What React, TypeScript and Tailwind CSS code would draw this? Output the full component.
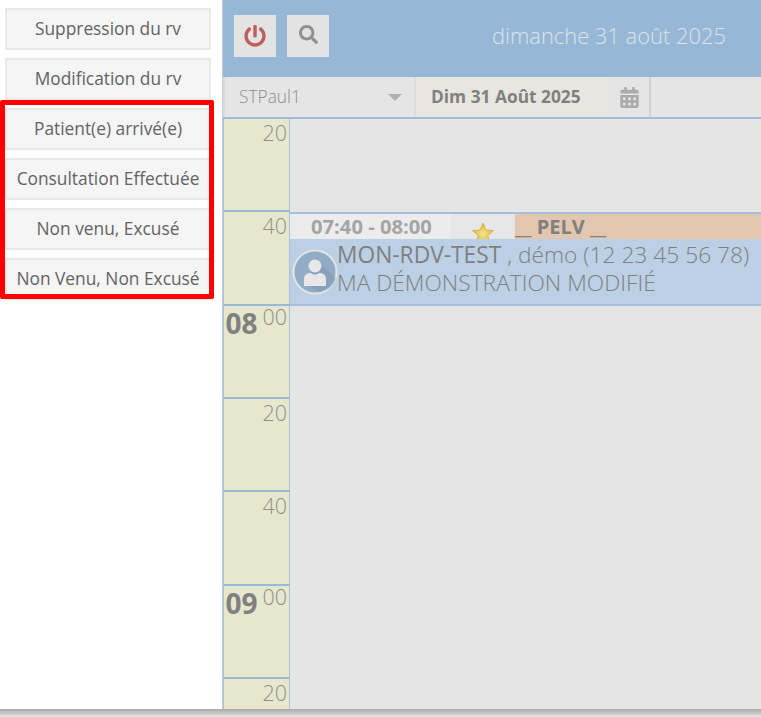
import React from "react";
import { FaPowerOff, FaSearch, FaCalendarAlt } from "react-icons/fa";

const actions = [
  "Suppression du rv",
  "Modification du rv",
  "Patient(e) arrivé(e)",
  "Consultation Effectuée",
  "Non venu, Excusé",
  "Non Venu, Non Excusé",
];

const TimeCell = ({ hour, min }: { hour?: string; min: string }) => (
  <div className="h-[93.33px] w-[67px] shrink-0 border-x border-b-2 border-[#98b7d5] border-x-[#a9c1d9] bg-[#e6e7cd] pr-[2px] text-right text-[#8f8f8f]">
    {hour && <span className="mr-[5px] text-[28px] leading-[34px] font-bold text-[#808080]">{hour}</span>}
    <span className={hour ? "relative top-[-9px] text-[21.5px] font-light" : "text-[21.5px] leading-[28px] font-light"}>{min}</span>
  </div>
);

const Avatar = () => (
  <svg viewBox="0 0 46 46" className="ml-[2px] mr-[-1px] h-[46px] w-[46px] shrink-0">
    <circle cx="23" cy="23" r="21.5" fill="#92abc6" stroke="#e3e3e3" strokeWidth="2" />
    <path d="M24 9 L44 30 A21 21 0 0 1 28 43 L14 36 Z" fill="#7f99b7" opacity="0.55" />
    <circle cx="23" cy="17" r="6.5" fill="#e8e8e8" />
    <path d="M12 37 V30 C12 25 16 24 19 24 C21 26 25 26 27 24 C30 24 34 25 34 30 V37 Z" fill="#e8e8e8" />
  </svg>
);

const GoldStar = () => (
  <svg viewBox="0 0 24 24" className="absolute left-[20px] top-[7px] h-[24px] w-[24px]">
    <defs>
      <radialGradient id="gold" cx="50%" cy="55%" r="50%">
        <stop offset="0%" stopColor="#f3e58a" />
        <stop offset="100%" stopColor="#dcb93f" />
      </radialGradient>
    </defs>
    <path d="M12 2 L15 9 L22.5 9.6 L16.8 14.5 L18.6 22 L12 18 L5.4 22 L7.2 14.5 L1.5 9.6 L9 9 Z" fill="url(#gold)" stroke="#cfae3f" strokeWidth="0.8" strokeLinejoin="round" />
  </svg>
);

export default function App() {
  return (
    <div className="relative flex h-[717px] w-[761px] overflow-hidden bg-white font-['Open_Sans',sans-serif]">
      {/* left action buttons */}
      <div className="flex w-[222px] shrink-0 flex-col gap-2 pl-[5px] pt-2">
        {actions.map((label) => (
          <div
            key={label}
            className="flex h-[42px] w-[206px] shrink-0 items-center justify-center whitespace-nowrap border-2 border-[#e8e8e8] bg-[#f5f5f5] text-[17.33px] text-[#636363]"
          >
            {label}
          </div>
        ))}
      </div>

      {/* agenda */}
      <div className="flex h-[709px] flex-1 flex-col overflow-hidden border-l border-[#c4cdd6] bg-[#e5e5e5]">
        <div className="flex h-[77px] shrink-0 items-start bg-[#97b7d6] pl-[11px] pt-[15px]">
          <div className="flex h-[42px] w-[42px] items-center justify-center bg-[#e3e3e3]">
            <FaPowerOff size={22} className="text-[#bd5f5f]" />
          </div>
          <div className="ml-[11px] flex h-[42px] w-[42px] items-center justify-center bg-[#e3e3e3]">
            <FaSearch size={19} className="mb-[4px] text-[#8f8f8f]" />
          </div>
          <span className="ml-[163px] mt-[5px] whitespace-nowrap text-[21.9px] font-light text-[#dce3ea]">dimanche 31 août 2025</span>
        </div>

        <div className="flex h-[42px] shrink-0 border-b-2 border-[#a3bbd4]">
          <div className="flex w-[193px] items-center justify-between border-x-2 border-[#dcdcdc] pl-[14px] pr-[12px]">
            <span className="text-[17.33px] font-light text-[#8c8c8c]">STPaul1</span>
            <span className="h-0 w-0 border-x-[7px] border-t-[7px] border-x-transparent border-t-[#b0b0b0]" />
          </div>
          <div className="flex w-[193px] items-center bg-[#e8e6e1] pl-[15px] text-[17.33px] font-bold text-[#808080]">
            Dim 31 Août 2025
          </div>
          <div className="flex w-[42px] items-center justify-center border-r-2 border-[#d2d2d2]">
            <FaCalendarAlt size={21} className="text-[#ababab]" />
          </div>
        </div>

        <div className="flex min-h-0 flex-1">
          <div className="flex w-[67px] shrink-0 flex-col">
            <TimeCell min="20" />
            <TimeCell min="40" />
            <TimeCell hour="08" min="00" />
            <TimeCell min="20" />
            <TimeCell min="40" />
            <TimeCell hour="09" min="00" />
            <TimeCell min="20" />
          </div>

          <div className="min-w-0 flex-1 pt-[93px]">
            <div className="flex h-[94px] flex-col border-y-2 border-[#a3bfdb]">
              <div className="flex h-[25px] shrink-0 bg-[#e7e7e7]">
                <div className="w-[161px] bg-[#ececec] pl-[21px] text-[20.2px] leading-[25px] font-bold text-[#a5a5a5]">07:40 - 08:00</div>
                <div className="relative w-[64px] overflow-hidden">
                  <GoldStar />
                </div>
                <div className="flex-1 bg-[#e3c6b0] text-[20px] leading-[25px] font-bold text-[#808080]">__ PELV __</div>
              </div>
              <div className="flex flex-1 items-center bg-[#bbd0e5]">
                <Avatar />
                <div className="mb-[6px] whitespace-nowrap text-[22.75px] leading-[28px] font-light text-[#808080]">
                  <div>
                    <span className="font-normal">MON-RDV-TEST</span> , démo (12 23 45 56 78)
                  </div>
                  <div>MA DÉMONSTRATION MODIFIÉ</div>
                </div>
              </div>
            </div>
          </div>
        </div>
      </div>

      {/* red highlight drawn over the buttons */}
      <div className="absolute left-0 top-[100px] h-[199px] w-[214px] rounded-[2px] border-[5px] border-[#ff0000]" />
      {/* bottom shadow */}
      <div className="absolute inset-x-0 bottom-0 h-[8px] bg-gradient-to-b from-[#a8a8a8] to-[#e6e6e6]" />
    </div>
  );
}
